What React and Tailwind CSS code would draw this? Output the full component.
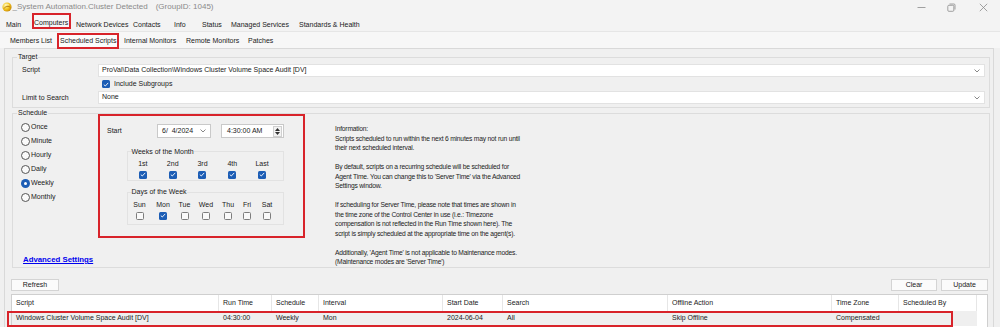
import React from 'react';

const weeks = ['1st', '2nd', '3rd', '4th', 'Last'];
const days = [
  { d: 'Sun', on: false },
  { d: 'Mon', on: true },
  { d: 'Tue', on: false },
  { d: 'Wed', on: false },
  { d: 'Thu', on: false },
  { d: 'Fri', on: false },
  { d: 'Sat', on: false },
];
const radios = ['Once', 'Minute', 'Hourly', 'Daily', 'Weekly', 'Monthly'];

const columns = [
  { h: 'Script', w: 'w-[207px]', v: 'Windows Cluster Volume Space Audit [DV]' },
  { h: 'Run Time', w: 'w-[53px]', v: '04:30:00' },
  { h: 'Schedule', w: 'w-[47px]', v: 'Weekly' },
  { h: 'Interval', w: 'w-[124px]', v: 'Mon' },
  { h: 'Start Date', w: 'w-[60px]', v: '2024-06-04' },
  { h: 'Search', w: 'w-[165px]', v: 'All' },
  { h: 'Offline Action', w: 'w-[164px]', v: 'Skip Offline' },
  { h: 'Time Zone', w: 'w-[67px]', v: 'Compensated' },
  { h: 'Scheduled By', w: 'w-[78px]', v: '' },
];

function Chevron() {
  return (
    <svg width="6" height="4" viewBox="0 0 6 4">
      <path d="M0.5 0.5 L3 3 L5.5 0.5" fill="none" stroke="#7a7a7a" strokeWidth="0.9" />
    </svg>
  );
}

function Check({ on }) {
  if (on) {
    return (
      <span className="w-[8px] h-[8px] rounded-[1.5px] bg-[#1c5db5] flex items-center justify-center">
        <svg width="6" height="5" viewBox="0 0 6 5">
          <path d="M0.8 2.6 L2.3 4 L5.2 0.9" fill="none" stroke="#fff" strokeWidth="0.9" />
        </svg>
      </span>
    );
  }
  return <span className="w-[8px] h-[8px] rounded-[1.5px] border border-[#7d7d7d] bg-[#f9f9f9]" />;
}

function Radio({ label, on }) {
  return (
    <div className="h-[14px] flex items-center">
      {on ? (
        <span className="w-[9px] h-[9px] rounded-full bg-[#1c5db5] flex items-center justify-center">
          <span className="w-[3px] h-[3px] rounded-full bg-white" />
        </span>
      ) : (
        <span className="w-[9px] h-[9px] rounded-full border border-[#555] bg-[#fafafa]" />
      )}
      <span className="ml-[1px]">{label}</span>
    </div>
  );
}

function Dropdown({ text }) {
  return (
    <div className="w-[887px] h-[13px] bg-white border border-[#e2e2e2] flex items-center pl-[3px] pr-[4px]">
      <span>{text}</span>
      <span className="ml-auto">
        <Chevron />
      </span>
    </div>
  );
}

function LogoIcon() {
  return (
    <svg width="10" height="10" viewBox="0 0 10 10">
      <defs>
        <radialGradient id="lg" cx="0.35" cy="0.35" r="0.7">
          <stop offset="0" stopColor="#fff6a8" />
          <stop offset="0.6" stopColor="#f2c21b" />
          <stop offset="1" stopColor="#c98a06" />
        </radialGradient>
      </defs>
      <circle cx="5" cy="5" r="4.6" fill="url(#lg)" />
      <path d="M2 6.5 C3.5 4 6.5 4 8.3 5.2" fill="none" stroke="#a46a05" strokeWidth="0.8" />
      <path d="M3 3 C4 2 6 2 7 3" fill="none" stroke="#fff" strokeWidth="0.6" opacity="0.7" />
    </svg>
  );
}

export default function App() {
  return (
    <div className="w-[1000px] h-[327px] overflow-hidden bg-[#f0f0f0] text-[7px] text-[#1a1a1a] font-['Liberation_Sans',Arial,sans-serif]">
      {/* title bar */}
      <div className="h-[13px] flex items-center pt-[1px] bg-[#f3f3f3]">
        <span className="ml-[1.5px] flex">
          <LogoIcon />
        </span>
        <span className="ml-[1px] text-[8px] text-[#8a8a8a] whitespace-pre">_System Automation.Cluster Detected</span>
        <span className="ml-[8px] text-[8px] text-[#8a8a8a]">(GroupID: 1045)</span>
        <div className="ml-auto mr-[12px] flex items-center">
          <svg width="9" height="9" viewBox="0 0 9 9">
            <path d="M0.5 4.5 H8.5" stroke="#8a8a8a" strokeWidth="0.8" />
          </svg>
          <svg className="ml-[21px]" width="9" height="9" viewBox="0 0 9 9">
            <rect x="0.8" y="2.3" width="6" height="6" rx="1" fill="none" stroke="#8a8a8a" strokeWidth="0.8" />
            <path d="M2.5 1 H7 Q8 1 8 2 V6.5" fill="none" stroke="#8a8a8a" strokeWidth="0.8" />
          </svg>
          <svg className="ml-[23px]" width="9" height="9" viewBox="0 0 9 9">
            <path d="M0.8 0.8 L8.2 8.2 M8.2 0.8 L0.8 8.2" stroke="#8a8a8a" strokeWidth="0.8" />
          </svg>
        </div>
      </div>

      {/* main tabs */}
      <div className="h-[18px] flex items-start pl-[6px] bg-[#f3f3f3]">
        <span className="w-[26px] mt-[7px] leading-[9px]">Main</span>
        <span className="w-[39px] h-[16px] border-2 border-[#d8232a] pt-[3.5px] leading-[8px] bg-[#f7f7f7]">Computers</span>
        <span className="ml-[5px] w-[57px] mt-[7px] leading-[9px]">Network Devices</span>
        <span className="w-[41px] mt-[7px] leading-[9px]">Contacts</span>
        <span className="w-[28px] mt-[7px] leading-[9px]">Info</span>
        <span className="w-[29px] mt-[7px] leading-[9px]">Status</span>
        <span className="w-[68px] mt-[7px] leading-[9px]">Managed Services</span>
        <span className="mt-[7px] leading-[9px]">Standards &amp; Health</span>
      </div>

      {/* sub tabs */}
      <div className="h-[17px] flex items-start pl-[10px] bg-[#f7f7f7] border-t border-[#e6e6e6]">
        <span className="w-[47px] mt-[3.5px] leading-[9px]">Members List</span>
        <span className="w-[62px] h-[16px] mt-[1px] border-2 border-[#d8232a] pl-[1px] flex items-center bg-[#fbfbfb]">Scheduled Scripts</span>
        <span className="ml-[5px] w-[62px] mt-[3.5px] leading-[9px]">Internal Monitors</span>
        <span className="w-[62px] mt-[3.5px] leading-[9px]">Remote Monitors</span>
        <span className="mt-[3.5px] leading-[9px]">Patches</span>
      </div>

      {/* content panel */}
      <div className="ml-[4px] w-[990px] h-[279px] border-t border-l border-r border-[#d9d9d9] pl-[7px]">
        {/* Target */}
        <fieldset className="mt-[3px] w-[978px] h-[56px] border border-[#dcdcdc]">
          <legend className="ml-[4px] px-[1px] leading-[10px]">Target</legend>
          <div className="mt-[2px] h-[13px] flex items-center">
            <span className="w-[85px] pl-[9px]">Script</span>
            <Dropdown text="ProVal\Data Collection\Windows Cluster Volume Space Audit [DV]" />
          </div>
          <div className="h-[14px] flex items-center pl-[89px]">
            <Check on />
            <span className="ml-[4px]">Include Subgroups</span>
          </div>
          <div className="h-[13px] flex items-center">
            <span className="w-[85px] pl-[9px] pt-[2px]">Limit to Search</span>
            <Dropdown text="None" />
          </div>
        </fieldset>

        {/* Schedule */}
        <fieldset className="w-[978px] h-[160px] border border-[#dcdcdc]">
          <legend className="ml-[4px] px-[1px] leading-[10px]">Schedule</legend>
          <div className="flex items-start">
            <div className="w-[292px]">
              <div className="flex items-start">
                <div className="w-[85px] pl-[8px] pt-[2.5px]">
                  {radios.map((r) => (
                    <Radio key={r} label={r} on={r === 'Weekly'} />
                  ))}
                </div>
                <div className="w-[207px] h-[124px] -mt-[4px] border-2 border-[#d8232a]">
                  <div className="mt-[8px] h-[14px] flex items-center">
                    <span className="w-[57px] pl-[7px]">Start</span>
                    <div className="w-[54px] h-[14px] bg-white border border-[#c9c9c9] flex items-center pl-[4px] pr-[4px]">
                      <span className="whitespace-pre">6/  4/2024</span>
                      <span className="ml-auto">
                        <Chevron />
                      </span>
                    </div>
                    <div className="ml-[10px] w-[63px] h-[14px] bg-white border border-[#c9c9c9] flex items-center pl-[5px] pr-[1px]">
                      <span>4:30:00 AM</span>
                      <span className="ml-auto w-[9px] h-[11px] border border-[#d0d0d0] bg-[#f3f3f3] flex flex-col items-center justify-center gap-[1px]">
                        <svg width="5" height="3" viewBox="0 0 5 3">
                          <path d="M0 3 L2.5 0 L5 3 Z" fill="#333" />
                        </svg>
                        <svg width="5" height="3" viewBox="0 0 5 3">
                          <path d="M0 0 L2.5 3 L5 0 Z" fill="#333" />
                        </svg>
                      </span>
                    </div>
                  </div>

                  <fieldset className="ml-[27px] mt-[9.5px] w-[157px] border border-[#e2e2e2] pb-[1.5px]">
                    <legend className="ml-[3.5px] leading-[8px]">Weeks of the Month</legend>
                    <div className="grid grid-cols-5 w-[149px] mt-[3px] leading-[9px] text-center">
                      {weeks.map((w) => (
                        <span key={w}>{w}</span>
                      ))}
                    </div>
                    <div className="grid grid-cols-5 w-[149px] mt-[3px] h-[8px]">
                      {weeks.map((w) => (
                        <span key={w} className="flex justify-center">
                          <Check on />
                        </span>
                      ))}
                    </div>
                  </fieldset>

                  <fieldset className="ml-[27px] mt-[7px] w-[157px] border border-[#e2e2e2] pb-[4px]">
                    <legend className="ml-[3.5px] leading-[8px]">Days of the Week</legend>
                    <div className="grid grid-cols-[23px_24px_19px_24px_20px_18px_22px] mt-[4px] leading-[9px] text-center">
                      {days.map((d) => (
                        <span key={d.d}>{d.d}</span>
                      ))}
                    </div>
                    <div className="grid grid-cols-[23px_24px_19px_24px_20px_18px_22px] mt-[2.5px] h-[8px]">
                      {days.map((d) => (
                        <span key={d.d} className="flex justify-center">
                          <Check on={d.on} />
                        </span>
                      ))}
                    </div>
                  </fieldset>
                </div>
              </div>
              <div className="mt-[17px] pl-[10px] leading-[10px] text-[7.8px] font-bold text-[#0000ee] underline">
                Advanced Settings
              </div>
            </div>

            <div className="ml-[30px] mt-[6px] text-[6.7px] leading-[9.5px] tracking-[-0.2px] text-[#222]">
              <p>Information:</p>
              <p>Scripts scheduled to run within the next 6 minutes may not run until</p>
              <p className="mb-[9.5px]">their next scheduled interval.</p>
              <p>By default, scripts on a recurring schedule will be scheduled for</p>
              <p>Agent Time. You can change this to 'Server Time' via the Advanced</p>
              <p className="mb-[9.5px]">Settings window.</p>
              <p>If scheduling for Server Time, please note that times are shown in</p>
              <p>the time zone of the Control Center in use (i.e.: Timezone</p>
              <p>compensation is not reflected in the Run Time shown here). The</p>
              <p className="mb-[9.5px]">script is simply scheduled at the appropriate time on the agent(s).</p>
              <p>Additionally, 'Agent Time' is not applicable to Maintenance modes.</p>
              <p>(Maintenance modes are 'Server Time')</p>
            </div>
          </div>
        </fieldset>

        {/* buttons */}
        <div className="mt-[11px] -ml-[1px] w-[977px] flex">
          <button className="w-[48px] h-[12px] bg-[#fbfbfb] border border-[#d4d4d4] leading-[10px]">Refresh</button>
          <button className="ml-auto w-[46px] h-[12px] bg-[#fbfbfb] border border-[#d4d4d4] leading-[10px]">Clear</button>
          <button className="ml-[4px] w-[47px] h-[12px] bg-[#fbfbfb] border border-[#d4d4d4] leading-[10px]">Update</button>
        </div>

        {/* table */}
        <div className="mt-[3px] -ml-[1px] w-[977px] h-[60px] border border-[#cfcfcf] bg-white">
          <div className="h-[16px] flex">
            {columns.map((c) => (
              <div key={c.h} className={`${c.w} h-full border-r border-[#e6e6e6] pl-[4px] flex items-center`}>
                {c.h}
              </div>
            ))}
          </div>
          <div className="relative h-[15px] w-[965px] flex bg-[#efefef]">
            {columns.map((c) => (
              <div key={c.h} className={`${c.w} h-full pl-[4px] flex items-center`}>
                {c.v}
              </div>
            ))}
            <div className="absolute -left-[5.5px] -top-[0.5px] w-[946px] h-[16px] border-2 border-[#d8232a]" />
          </div>
        </div>
      </div>
    </div>
  );
}
